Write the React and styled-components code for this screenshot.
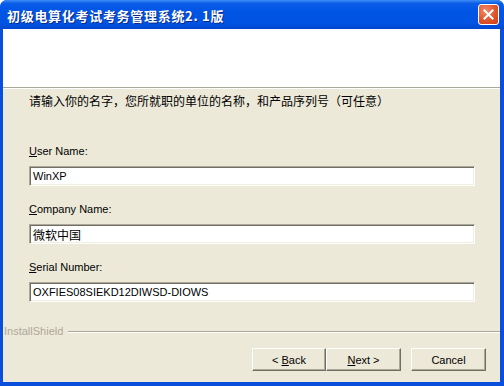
import styled, { createGlobalStyle } from "styled-components";

const GlobalStyle = createGlobalStyle`
    html, body {
        margin: 0;
        padding: 0;
        background: #ffffff;
    }
    body {
        font-family: "Liberation Sans", "Noto Sans CJK SC", sans-serif;
        font-size: 11px;
    }
`;

const Window = styled.div`
    width: 504px;
    height: 386px;
    display: flex;
    flex-direction: column;
    border-radius: 7px 7px 0 0;
    overflow: hidden;
    background: #0a4fdc;
`;

const TitleBar = styled.div`
    height: 29px;
    flex: 0 0 29px;
    display: flex;
    align-items: center;
    justify-content: space-between;
    padding: 0 5px 0 7px;
    box-sizing: border-box;
    background: linear-gradient(
        to bottom,
        #3d8cf5 0%,
        #0a5ce8 12%,
        #0055e5 40%,
        #0053e3 80%,
        #0047cf 100%
    );
`;

const Title = styled.span`
    color: #ffffff;
    font-family: "Noto Sans CJK SC", sans-serif;
    font-weight: bold;
    font-size: 13px;
    letter-spacing: 0.7px;
    text-shadow: 1px 1px 0 #0a2a8a;
    padding-top: 1px;
`;

const CloseButton = styled.div`
    width: 21px;
    height: 21px;
    box-sizing: border-box;
    border: 1px solid #ffffff;
    border-radius: 3px;
    background: radial-gradient(circle at 35% 30%, #f08a6a 0%, #e0542c 55%, #c8401c 100%);
    display: flex;
    align-items: center;
    justify-content: center;
`;

const Frame = styled.div`
    flex: 1;
    display: flex;
    flex-direction: column;
    margin: 0 4px 4px 3px;
    background: #ece9d8;
`;

const Header = styled.div`
    height: 58px;
    flex: 0 0 58px;
    background: #ffffff;
    border-bottom: 1px solid #aca899;
    box-shadow: 0 1px 0 #ffffff;
`;

const Content = styled.div`
    display: flex;
    flex-direction: column;
    padding: 6px 25px 0 26px;
`;

const Intro = styled.div`
    font-family: "Noto Sans CJK SC", sans-serif;
    font-size: 12px;
    line-height: 14px;
    color: #000000;
    margin-bottom: 37px;
`;

const Fields = styled.div`
    display: flex;
    flex-direction: column;
    gap: 17px;
`;

const Field = styled.div`
    display: flex;
    flex-direction: column;
    gap: 8px;
`;

const Label = styled.label`
    font-size: 11px;
    line-height: 13px;
    color: #000000;
    u {
        text-decoration: underline;
    }
`;

const TextBox = styled.div`
    height: 20px;
    box-sizing: border-box;
    background: #ffffff;
    border-top: 1px solid #aca899;
    border-left: 1px solid #aca899;
    border-right: 1px solid #ffffff;
    border-bottom: 1px solid #ffffff;
    box-shadow: inset 1px 1px 0 #716f64, inset -1px -1px 0 #f1efe2;
    padding: 0 3px;
    display: flex;
    align-items: center;
    font-family: "Liberation Sans", "Noto Sans CJK SC", sans-serif;
    font-size: ${(p) => (p.$cjk ? "12px" : "11px")};
    color: #000000;
`;

const Brand = styled.div`
    display: flex;
    align-items: center;
    gap: 5px;
    margin: 23px 0 0 1px;
    color: #aca899;
    font-size: 11px;
    line-height: 13px;
`;

const Rule = styled.div`
    flex: 1;
    height: 1px;
    background: #aca899;
    box-shadow: 0 1px 0 #ffffff;
`;

const ButtonRow = styled.div`
    display: flex;
    justify-content: flex-end;
    padding: 10px 14px 0 0;
`;

const ButtonPair = styled.div`
    display: flex;
    margin-right: 10px;
`;

const Button = styled.button`
    width: ${(p) => p.$w || 75}px;
    height: 23px;
    box-sizing: border-box;
    background: #ece9d8;
    border: none;
    border-top: 1px solid #ffffff;
    border-left: 1px solid #ffffff;
    border-right: 1px solid #716f64;
    border-bottom: 1px solid #716f64;
    box-shadow: inset -1px -1px 0 #aca899;
    font-family: "Liberation Sans", sans-serif;
    font-size: 11px;
    color: #000000;
    padding: 0;
    u {
        text-decoration: underline;
    }
`;

export default function App() {
    return (
        <>
            <GlobalStyle />
            <Window>
                <TitleBar>
                    <Title>初级电算化考试考务管理系统2. 1版</Title>
                    <CloseButton>
                        <svg width="11" height="11" viewBox="0 0 11 11">
                            <path d="M1.5 1.5 L9.5 9.5 M9.5 1.5 L1.5 9.5" stroke="#ffffff" strokeWidth="2" strokeLinecap="square" />
                        </svg>
                    </CloseButton>
                </TitleBar>
                <Frame>
                    <Header />
                    <Content>
                        <Intro>请输入你的名字，您所就职的单位的名称，和产品序列号（可任意）</Intro>
                        <Fields>
                            <Field>
                                <Label><u>U</u>ser Name:</Label>
                                <TextBox>WinXP</TextBox>
                            </Field>
                            <Field>
                                <Label><u>C</u>ompany Name:</Label>
                                <TextBox $cjk>微软中国</TextBox>
                            </Field>
                            <Field>
                                <Label><u>S</u>erial Number:</Label>
                                <TextBox>OXFIES08SIEKD12DIWSD-DIOWS</TextBox>
                            </Field>
                        </Fields>
                    </Content>
                    <Brand>
                        InstallShield
                        <Rule />
                    </Brand>
                    <ButtonRow>
                        <ButtonPair>
                            <Button $w={74}>&lt; <u>B</u>ack</Button>
                            <Button $w={75}><u>N</u>ext &gt;</Button>
                        </ButtonPair>
                        <Button $w={75}>Cancel</Button>
                    </ButtonRow>
                </Frame>
            </Window>
        </>
    );
}
